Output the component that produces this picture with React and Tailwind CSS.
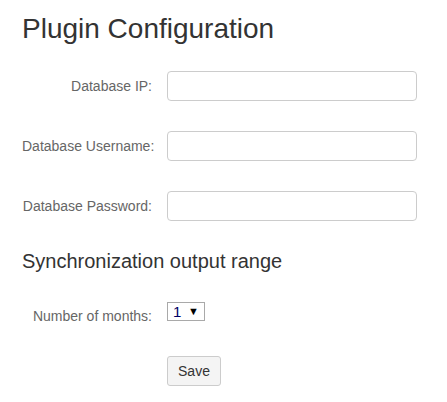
import React from "react";

const fields = [
  { label: "Database IP:", type: "text" },
  { label: "Database Username:", type: "text" },
  { label: "Database Password:", type: "password" },
];

export default function App() {
  return (
    <div className="min-h-screen bg-white px-[22px] font-['Liberation_Sans',Arial,sans-serif]">
      <h1 className="pt-[13px] text-[28px] leading-[32px] font-normal text-[#333]">Plugin Configuration</h1>

      <form className="mt-[26px] flex flex-col gap-[30px]" onSubmit={(e) => e.preventDefault()}>
        {fields.map((f) => (
          <div key={f.label} className="flex items-center">
            <label className="w-[130px] shrink-0 whitespace-nowrap text-right text-[14px] leading-[20px] text-[#666]">
              {f.label}
            </label>
            <input
              type={f.type}
              className="ml-[15px] h-[30px] w-[250px] rounded-[4px] border border-[#ccc] px-3 text-[14px] outline-none"
            />
          </div>
        ))}
      </form>

      <h4 className="mt-[28px] text-[20px] leading-[24px] font-normal text-[#333]">Synchronization output range</h4>

      <div className="mt-[29px] flex items-start">
        <label className="w-[130px] shrink-0 whitespace-nowrap pt-[4px] text-right text-[14px] leading-[20px] text-[#666]">
          Number of months:
        </label>
        <div className="ml-[15px] flex h-[19px] w-[38px] items-center justify-between border border-[#a9a9a9] bg-white pl-[5px] pr-[5px]">
          <span className="text-[15px] leading-none text-[#000066]">1</span>
          <span className="text-[11px] leading-none text-black">▼</span>
        </div>
      </div>

      <button className="ml-[145px] mt-[30px] h-[30px] w-[54px] rounded-[3px] border border-[#ccc] bg-[#f4f4f4] text-[14px] text-[#333]">
        Save
      </button>
    </div>
  );
}
